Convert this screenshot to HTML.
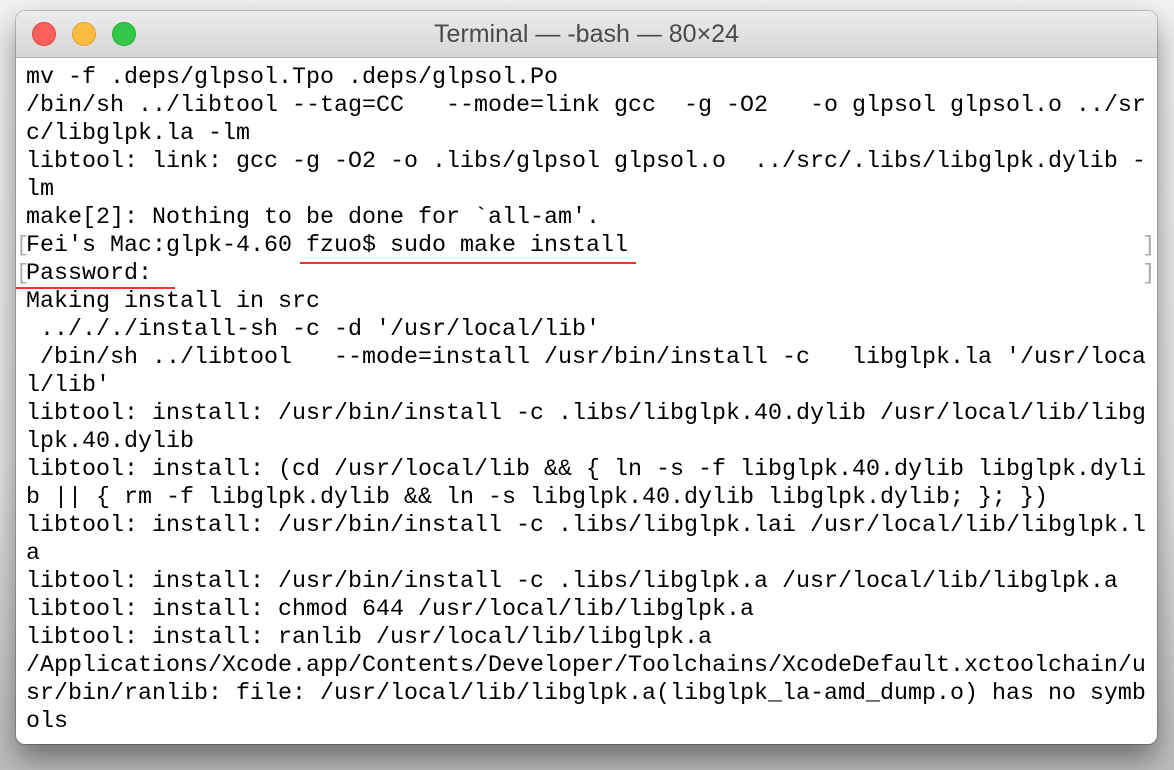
<!DOCTYPE html>
<html><head><meta charset="utf-8"><style>
html,body{margin:0;padding:0;width:1174px;height:770px;overflow:hidden;background:linear-gradient(#f2f2f2,#e6e6e6 60%,#bdbdbd);}
.win{position:absolute;left:16px;top:11px;width:1141px;height:733px;background:#fff;border-radius:9px;box-shadow:0 14px 30px rgba(0,0,0,.45),0 0 0 1px rgba(0,0,0,.18);overflow:hidden}
.tb{height:46px;background:linear-gradient(#ececec,#d6d6d6);border-bottom:1px solid #b0b0b0;position:relative}
.dot{position:absolute;top:11px;width:23px;height:23px;border-radius:50%}
.title{position:absolute;left:0;right:0;top:9px;text-align:center;font:25px "Liberation Sans",sans-serif;color:#4a4a4a}
pre{position:absolute;left:10px;top:53px;margin:0;font:23.33px/28px "Liberation Mono",monospace;color:#000}
.br{position:absolute;color:#aaa;font:22px/28px "Liberation Mono",monospace}
.ul{position:absolute;height:1.5px;background:#e33}
</style></head><body>
<div class="win">
<div class="tb">
<div class="dot" style="left:16px;background:#fc605c;border:1px solid #de4841;width:22px;height:22px"></div>
<div class="dot" style="left:56px;background:#fdbc40;border:1px solid #dea034;width:22px;height:22px"></div>
<div class="dot" style="left:96px;background:#34c84a;border:1px solid #27aa35;width:22px;height:22px"></div>
<div class="title">Terminal — -bash — 80×24</div>
</div>
<pre>mv -f .deps/glpsol.Tpo .deps/glpsol.Po
/bin/sh ../libtool --tag=CC   --mode=link gcc  -g -O2   -o glpsol glpsol.o ../sr
c/libglpk.la -lm
libtool: link: gcc -g -O2 -o .libs/glpsol glpsol.o  ../src/.libs/libglpk.dylib -
lm
make[2]: Nothing to be done for `all-am'.
Fei's Mac:glpk-4.60 fzuo$ sudo make install
Password:
Making install in src
 ../././install-sh -c -d '/usr/local/lib'
 /bin/sh ../libtool   --mode=install /usr/bin/install -c   libglpk.la '/usr/loca
l/lib'
libtool: install: /usr/bin/install -c .libs/libglpk.40.dylib /usr/local/lib/libg
lpk.40.dylib
libtool: install: (cd /usr/local/lib &amp;&amp; { ln -s -f libglpk.40.dylib libglpk.dyli
b || { rm -f libglpk.dylib &amp;&amp; ln -s libglpk.40.dylib libglpk.dylib; }; })
libtool: install: /usr/bin/install -c .libs/libglpk.lai /usr/local/lib/libglpk.l
a
libtool: install: /usr/bin/install -c .libs/libglpk.a /usr/local/lib/libglpk.a
libtool: install: chmod 644 /usr/local/lib/libglpk.a
libtool: install: ranlib /usr/local/lib/libglpk.a
/Applications/Xcode.app/Contents/Developer/Toolchains/XcodeDefault.xctoolchain/u
sr/bin/ranlib: file: /usr/local/lib/libglpk.a(libglpk_la-amd_dump.o) has no symb
ols</pre>
<div class="br" style="left:0px;top:221px">[</div>
<div class="br" style="left:0px;top:249px">[</div>
<div class="br" style="left:1126px;top:221px">]</div>
<div class="br" style="left:1126px;top:249px">]</div>
<div class="ul" style="left:284px;width:336px;top:251px"></div>
<div class="ul" style="left:0px;width:159px;top:276px"></div>
</div>
</body></html>
